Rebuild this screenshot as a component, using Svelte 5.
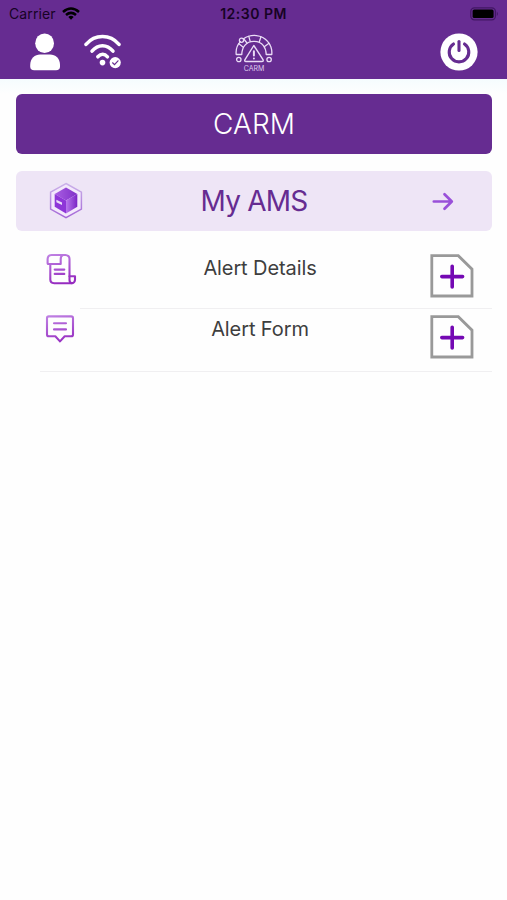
<script lang="ts">
	type Item = { label: string; icon: 'scroll' | 'message' };

	const items: Item[] = [
		{ label: 'Alert Details', icon: 'scroll' },
		{ label: 'Alert Form', icon: 'message' }
	];
</script>

<div class="screen">
	<header>
		<div class="status">
			<div class="carrier">
				<span>Carrier</span>
				<svg width="18" height="13" viewBox="0 0 18 13" fill="none" stroke="#000" stroke-width="2.6">
					<path d="M1 4.9Q9 -1.9 17 4.9" />
					<path d="M4 8Q9 3.8 14 8" />
					<path d="M6.3 9.9Q9 7.8 11.7 9.9L9 12.8Z" fill="#000" stroke="none" />
				</svg>
			</div>
			<span class="time">12:30 PM</span>
			<svg class="battery" width="29" height="14" viewBox="0 0 29 14">
				<rect x="0.8" y="0.8" width="24.6" height="12" rx="3.6" fill="none" stroke="#421764" stroke-width="1.2" />
				<rect x="2.6" y="2.5" width="21" height="8.6" rx="1.6" />
				<path d="M26.8 4.4q2.2 2.3 0 4.7z" fill="#421764" />
			</svg>
		</div>

		<div class="toolbar">
			<div class="left">
				<svg width="31" height="38" viewBox="0 0 31 38" fill="#fff">
					<ellipse cx="14.6" cy="10.2" rx="9.4" ry="9.8" />
					<path d="M0.2 32C0.2 25 5 21.4 10 21.4H20C25.5 21.4 30 25 30 32V33.5Q30 37.3 26 37.3H4.2Q0.2 37.3 0.2 33.5Z" />
				</svg>
				<svg width="38" height="36" viewBox="0 0 38 36" fill="none" stroke="#fff" stroke-width="3.5" stroke-linecap="round">
					<path d="M2 10.4C11 0 26 0 35 10.4" />
					<path d="M8 17.2C14 10 23 10 29 17.2" />
					<path d="M13.8 22.8C17 19.4 20.5 19.4 23.5 22.8" />
					<circle cx="18.5" cy="28.6" r="2.8" fill="#fff" stroke="none" />
					<circle cx="31.2" cy="28.6" r="5.6" fill="#fff" stroke="none" />
					<path d="M28.6 28.8L30.5 30.6L34 26.8" stroke="#662c91" stroke-width="1.2" />
				</svg>
			</div>
			<div class="logo">
				<svg width="40" height="30" viewBox="0 0 40 30" fill="none" stroke="#eadcf6" stroke-width="1.3" stroke-linejoin="round" stroke-linecap="round">
					<path d="M2.2 20.5C1.6 15 3.5 10.6 6.4 7.6M9.5 4.8C17 -0.5 28.2 0.5 33.6 7.4C37 11.3 38.2 15.5 37.8 20.5H32.2C32 16.6 31.3 14 29.4 11.7C25.1 6.3 15.6 5.9 11 11.1C8.6 13.8 7.9 16.5 7.8 20.5H2.2" />
					<path d="M9.8 5L13 9M4.6 9.6L9 13M14.8 2.4L16.2 7.4M27 2.8L25.3 7.7M35 9.3L30.6 12.6" />
					<circle cx="7.5" cy="6.3" r="2.1" />
					<circle cx="4.8" cy="25.5" r="2.2" />
					<circle cx="35.1" cy="25.5" r="2.2" />
					<path d="M19.8 11.5L29 25.6Q29.8 27.5 27.8 27.5H12Q10 27.5 11 25.6Z" fill="#662c91" stroke-width="1.4" />
					<path d="M19.9 17.3V21.6M19.9 24.4V24.5" stroke-width="2" />
				</svg>
				<span>CARM</span>
			</div>
			<svg class="power" width="38" height="38" viewBox="0 0 38 38" fill="none" stroke="#662c91" stroke-width="3.1" stroke-linecap="round">
				<circle cx="19" cy="19" r="18.6" fill="#fff" stroke="none" />
				<path d="M13.5 11A9.8 9.8 0 1 0 24.5 11" />
				<path d="M19 8.5V17.5" />
			</svg>
		</div>
	</header>

	<main>
		<div class="banner">CARM</div>

		<div class="section">
			<svg width="36" height="38" viewBox="0 0 36 38">
				<defs>
					<linearGradient id="side" x1="0" x2="1">
						<stop offset="0" stop-color="#b878ed" />
						<stop offset="1" stop-color="#7a24c5" />
					</linearGradient>
					<linearGradient id="top" x1="0" x2="1">
						<stop offset="0" stop-color="#a95ee3" />
						<stop offset="1" stop-color="#8030c8" />
					</linearGradient>
					<linearGradient id="ring" x1="0" y1="0" x2="0" y2="1">
						<stop offset="0" stop-color="#cbb2e9" />
						<stop offset="1" stop-color="#a467d7" />
					</linearGradient>
				</defs>
				<path d="M18 1.5L33.4 10.1V27.1L18 35.7L2.6 27.1V10.1Z" fill="#f3e8fc" stroke="url(#ring)" stroke-width="1.5" />
				<path d="M18 5.6L29.3 12L18 18.4L6.7 12Z" fill="url(#top)" />
				<path d="M6.7 12L18 18.4V31.4L6.7 24.8Z" fill="#8e36d8" />
				<path d="M18 18.4L29.3 12V24.8L18 31.4Z" fill="url(#side)" />
				<path d="M8.4 17.8L14 20.6V23L8.4 20.3Z" fill="#eadcf8" />
			</svg>
			<span>My AMS</span>
			<svg class="arrow" width="22" height="20" viewBox="0 0 22 20" fill="none" stroke="#9950d9" stroke-width="2.7" stroke-linecap="round" stroke-linejoin="round">
				<path d="M1.8 10.5H19.5M12.5 3.3L19.8 10.5L12.5 17.8" />
			</svg>
		</div>

		<ul>
			{#each items as item}
				<li class={item.icon}>
					<svg class="icon" width="32" height="34" viewBox="0 0 32 34" fill="none" stroke="url(#ink-{item.icon})" stroke-width="2.1" stroke-linejoin="round" stroke-linecap="round">
						<defs>
							<linearGradient id="ink-{item.icon}" gradientUnits="userSpaceOnUse" x1="0" y1="2" x2="8" y2="32">
								<stop offset="0" stop-color="#c083e4" />
								<stop offset="1" stop-color="#962bc0" />
							</linearGradient>
						</defs>
						{#if item.icon === 'scroll'}
							<path d="M6.5 2H20.5Q24.5 2.4 24.5 6V23.2H30V27Q29.7 30.2 26.5 30.2H9.2Q5.3 30 5.3 26.5V11H3.4Q2.6 11 2.6 10V6Q2.8 2.2 6.5 2Z" />
							<path d="M5.3 11H15.7V6Q15.7 3 18 2M24.5 23.2V27Q24.5 30.2 27 30.2" />
							<path d="M9.7 16.6H19.3M9.7 20.9H19.3" />
						{:else}
							<path d="M3.8 2.4H26.2Q28 2.4 28 4.2V20.5Q28 22.3 26.2 22.3H19.7L15 27.4L10.3 22.3H3.8Q2 22.3 2 20.5V4.2Q2 2.4 3.8 2.4Z" />
							<path d="M9 9.2H21M9 15.4H21" />
						{/if}
					</svg>
					<span>{item.label}</span>
					<svg class="add" width="44" height="44" viewBox="0 0 44 44" fill="none">
						<path d="M1.8 1.7H28.3L42 15.2V42H1.8Z" stroke="#999" stroke-width="2.8" />
						<path d="M22.2 12.2V33M11.8 22.6H32.6" stroke="#7409b3" stroke-width="3.6" stroke-linecap="round" />
					</svg>
				</li>
			{/each}
		</ul>
	</main>
</div>

<style>
	:global(body) {
		margin: 0;
		background: #fefefe;
	}

	.screen {
		min-height: 900px;
		font-family: Inter, "Liberation Sans", sans-serif;
		background: linear-gradient(#f5fcfe 79px, #fefefe 94px);
	}

	svg {
		display: block;
		flex-shrink: 0;
	}

	header {
		box-sizing: border-box;
		height: 79px;
		background: #662c91;
	}

	.status {
		display: grid;
		grid-template-columns: 1fr auto 1fr;
		align-items: center;
		height: 27px;
		padding: 0 8px 0 8px;
		font-size: 14px;
		color: #170325;
	}

	.carrier {
		display: flex;
		align-items: center;
		gap: 6px;
		padding-left: 1px;
		letter-spacing: 0.12px;
	}

	.time {
		font-size: 14px;
		font-weight: 600;
		letter-spacing: 0.5px;
	}

	.battery {
		justify-self: end;
	}

	.toolbar {
		display: grid;
		grid-template-columns: 1fr auto 1fr;
		align-items: center;
		height: 50px;
		padding: 0 29px 0 30px;
	}

	.left {
		display: flex;
		align-items: center;
		gap: 23px;
	}

	.logo {
		display: flex;
		flex-direction: column;
		align-items: center;
		padding-top: 2px;
		font-size: 7px;
		line-height: 9px;
		color: #dfcbee;
	}

	.power {
		justify-self: end;
	}

	main {
		padding: 15px 15px 0 16px;
	}

	.banner {
		height: 60px;
		border-radius: 6px;
		background: #662c91;
		color: #fff;
		font-size: 28px;
		font-weight: 300;
		line-height: 60px;
		text-align: center;
	}

	.section {
		display: grid;
		grid-template-columns: 1fr auto 1fr;
		align-items: center;
		height: 60px;
		margin-top: 17px;
		padding: 0 38px 0 32px;
		box-sizing: border-box;
		border-radius: 6px;
		background: #eee5f6;
		color: #662c91;
		font-size: 28px;
		letter-spacing: -0.8px;
	}

	.section span {
		padding-left: 6px;
	}

	.arrow {
		justify-self: end;
	}

	ul {
		margin: 15px 0 0 24px;
		padding: 0;
		list-style: none;
	}

	li {
		display: grid;
		grid-template-columns: 40px 1fr 62px;
		align-items: start;
		height: 63px;
		padding-left: 5px;
		box-sizing: border-box;
		border-bottom: 1px solid #f0eff1;
		color: #3e3e3e;
		font-size: 20px;
		line-height: 24px;
		letter-spacing: -0.1px;
	}

	li.scroll {
		border-image: linear-gradient(90deg, transparent 41px, #f0eff1 41px) 1;
	}

	.icon {
		margin-top: 5px;
	}

	li.scroll .icon {
		margin-top: 7px;
	}

	li span {
		margin-top: 8px;
		padding-left: 5px;
		text-align: center;
	}

	li.scroll span {
		margin-top: 10px;
	}

	.add {
		margin-top: 6px;
	}

	li.scroll .add {
		margin-top: 8px;
	}
</style>
